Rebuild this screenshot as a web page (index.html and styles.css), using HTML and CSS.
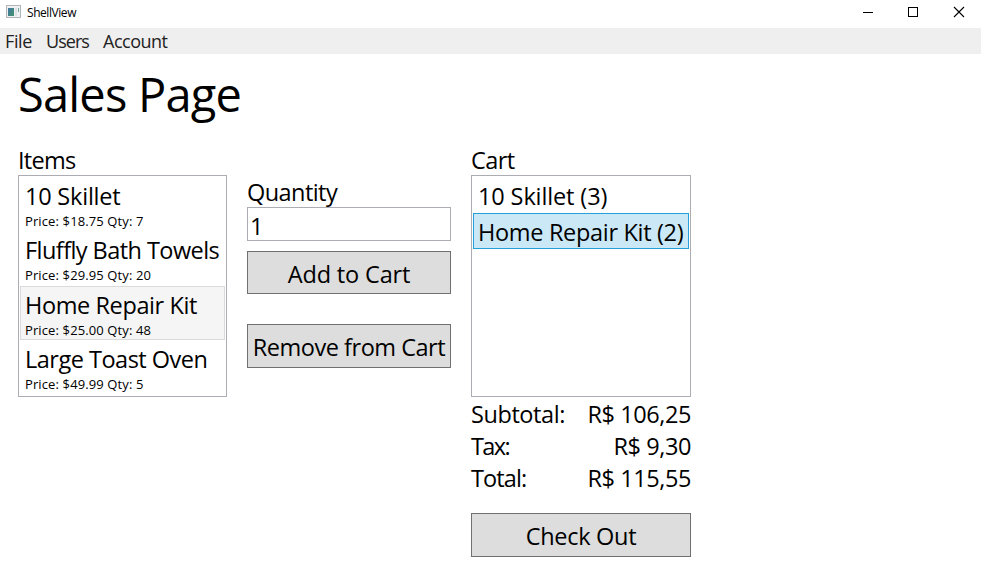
FILE: index.html
```
<!DOCTYPE html>
<html lang="en">
<head>
<meta charset="utf-8">
<title>ShellView</title>
<link rel="stylesheet" href="styles.css">
</head>
<body>
<header class="titlebar">
  <svg class="app-icon" width="16" height="14" viewBox="0 0 16 14">
    <defs><linearGradient id="pane" x1="0" y1="0" x2="1" y2="1"><stop offset="0" stop-color="#4276a4"/><stop offset="1" stop-color="#43936b"/></linearGradient></defs>
    <rect x=".5" y=".5" width="14" height="12" fill="#eef0f1" stroke="#b0b6ba"/>
    <rect x="2" y="3" width="6" height="8" fill="url(#pane)"/>
    <rect x="9" y="3" width="2" height="8" fill="#dde1e4"/>
    <rect x="12" y="3" width="1" height="4" fill="#79a697"/>
  </svg>
  <span class="window-title">ShellView</span>
  <div class="window-controls">
    <svg width="46" height="24" viewBox="0 0 46 24" shape-rendering="crispEdges"><path d="M17 12.5h10" stroke="#000"/></svg>
    <svg width="46" height="24" viewBox="0 0 46 24" shape-rendering="crispEdges"><rect x="16.500" y="7.500" width="9" height="9" fill="none" stroke="#000"/></svg>
    <svg width="46" height="24" viewBox="0 0 46 24"><path d="M16 7l10 10M26 7l-10 10" stroke="#000" stroke-width="1.100"/></svg>
  </div>
</header>
<nav class="menu">
  <span class="menu-file">File</span><span class="menu-users">Users</span><span class="menu-account">Account</span>
</nav>
<main class="page">
  <h1>Sales Page</h1>
  <div class="columns">
    <section class="items">
      <h2 class="tight">Items</h2>
      <ul class="list">
        <li class="product"><b class="name-skillet">10 Skillet</b><small>Price: $18.75 Qty: 7</small></li>
        <li class="product"><b class="name-towels">Fluffly Bath Towels</b><small>Price: $29.95 Qty: 20</small></li>
        <li class="product hovered"><b class="name-kit">Home Repair Kit</b><small>Price: $25.00 Qty: 48</small></li>
        <li class="product"><b class="name-oven">Large Toast Oven</b><small>Price: $49.99 Qty: 5</small></li>
      </ul>
    </section>
    <section class="actions">
      <h2 class="name-towels">Quantity</h2>
      <input type="text" value="1">
      <button class="add">Add to Cart</button>
      <button class="remove">Remove from Cart</button>
    </section>
    <section class="cart">
      <h2 class="label-cart">Cart</h2>
      <ul class="list">
        <li class="line line-skillet">10 Skillet (3)</li>
        <li class="line selected">Home Repair Kit (2)</li>
      </ul>
      <dl class="totals">
        <div><dt>Subtotal:</dt><dd>R$ 106,25</dd></div>
        <div><dt class="label-tax">Tax:</dt><dd>R$ 9,30</dd></div>
        <div><dt class="label-total">Total:</dt><dd>R$ 115,55</dd></div>
      </dl>
      <button class="checkout">Check Out</button>
    </section>
  </div>
</main>
</body>
</html>
```
FILE: styles.css
```
* { box-sizing: border-box; margin: 0; padding: 0; }

body {
  background: #fff;
  color: #000;
  font: 23.5px/32px "Open Sans", "Noto Sans", sans-serif;
  width: 981px;
  height: 587px;
  overflow: hidden;
}

.titlebar { display: flex; height: 28px; padding-left: 6px; }
.app-icon { margin-top: 5px; }
.window-title { margin-left: 5px; font-size: 12px; line-height: 26px; letter-spacing: -0.44px; }
.window-controls { display: flex; margin-left: auto; margin-right: -3px; }

.menu { display: flex; height: 26px; padding-left: 5px; background: #efefef; color: #222; font-size: 18px; line-height: 26px; white-space: nowrap; }
.menu-file { width: 41px; letter-spacing: -0.4px; }
.menu-users { width: 57px; letter-spacing: -0.95px; }
.menu-account { letter-spacing: -0.5px; }

.page { padding: 8px 18px 0; }
h1 { height: 82px; font-size: 47px; font-weight: 400; line-height: 64px; letter-spacing: -0.8px; }
h2 { height: 31px; font-size: 23.5px; font-weight: 400; }

.columns { display: flex; gap: 20px; }
.items { width: 209px; }
.actions { display: flex; flex-direction: column; width: 204px; padding-top: 32px; }
.cart { width: 220px; }

.list { height: 222px; padding: 1px; border: 1px solid #abadb3; list-style: none; white-space: nowrap; }
.product { height: 54.4px; padding: 4px 4px 0; border: 1px solid transparent; }
.product b { display: block; height: 31px; font-weight: 400; line-height: 28px; }
.product small { display: block; font-size: 13px; line-height: 17px; letter-spacing: 0.12px; }
.hovered { background: #f5f5f5; border-color: #dadada; }

.line { height: 36px; padding: 2px 4px; border: 1px solid transparent; letter-spacing: -0.32px; }
.selected { background: #cbe8f6; border-color: #26a0da; }

input { height: 34px; padding: 3px 2px 0; border: 1px solid #abadb3; font: inherit; }
button { width: 100%; background: #ddd; border: 1px solid #707070; color: #000; font: inherit; white-space: nowrap; }
.add { height: 43px; margin-top: 10px; padding-top: 2px; letter-spacing: -0.15px; }
.remove { height: 44px; margin-top: 30px; padding-top: 2px; letter-spacing: -0.48px; }
.checkout { height: 44px; margin-top: 19px; padding-top: 2px; letter-spacing: -0.29px; }

.totals { padding-top: 1px; }
.totals div { display: flex; justify-content: space-between; letter-spacing: -0.42px; }

.tight { letter-spacing: -0.7px; }
.name-skillet { letter-spacing: -0.21px; }
.name-towels { letter-spacing: -0.56px; }
.name-kit { letter-spacing: -0.4px; }
.name-oven { letter-spacing: -0.5px; }
.label-cart { letter-spacing: -0.6px; }
.line-skillet { letter-spacing: -0.12px; }
.label-tax { letter-spacing: -1.6px; }
.label-total { letter-spacing: -0.9px; }
```
